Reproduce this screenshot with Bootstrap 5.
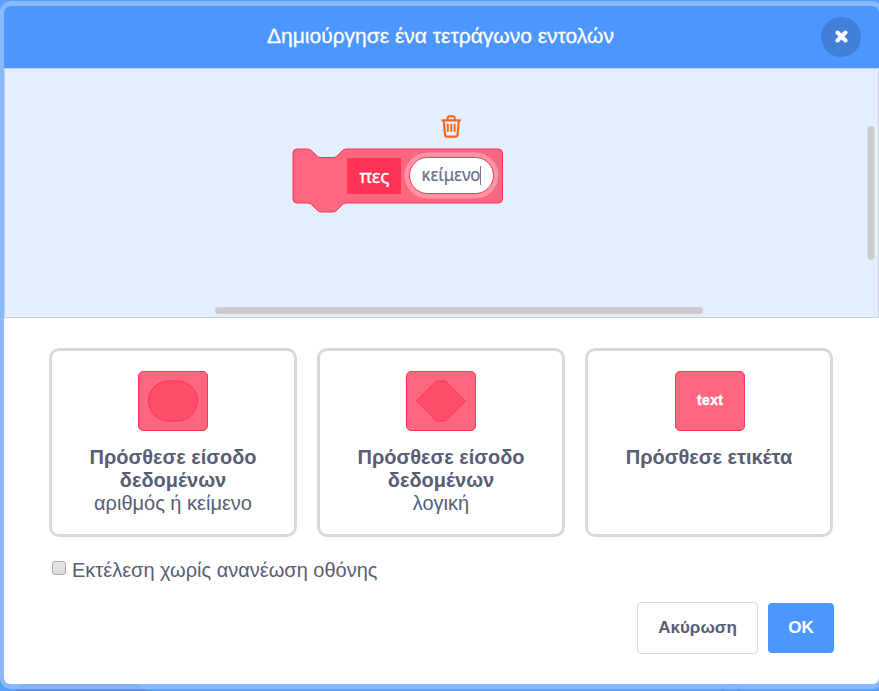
<!DOCTYPE html>
<html lang="el">
<head>
<meta charset="utf-8">
<meta name="viewport" content="width=device-width, initial-scale=1">
<title>Δημιούργησε ένα τετράγωνο εντολών</title>
<link href="https://cdn.jsdelivr.net/npm/bootstrap@5.3.0/dist/css/bootstrap.min.css" rel="stylesheet">
<style>
body{font-family:"Liberation Sans",Arial,sans-serif;color:#575e75;background:#5a9ffb;height:691px;overflow:hidden}
.backdrop-deco{position:absolute;left:0;top:0;z-index:-1}
.page{padding-top:1px;isolation:isolate}
.dialog-frame{width:883px;height:688px;border:solid rgba(255,255,255,.28);border-width:5px 4px;border-radius:11px;background-clip:padding-box}
.dialog-box{width:875px;height:678px;border-radius:6px;background:#fff}
.dialog-head{height:62px;background:#4c97ff;color:#fff;display:grid;grid-template-columns:58px 1fr 58px}
.dialog-title{font-size:21px;line-height:24px;font-weight:400;-webkit-text-stroke:.3px #fff;padding:0 2px 3px 0}
.close-btn{width:40px;height:40px;background:#4280d7;margin-bottom:1px}
.workspace{height:250px;background:#e3effe;border:1px solid #ccd0d6}
.options{gap:20px;padding:30px 46px 0 45px}
.option{width:248px;height:189px;border:3px solid #d9d9d9;border-radius:10px;padding-top:20px;background:#fff;font-size:20px;line-height:23px;color:#575e75}
.option svg{margin-bottom:15px}
.check-row{padding:21px 0 0 48px;font-size:20px;line-height:24px}
.check-box{appearance:none;width:14px;height:14px;margin:3px 6px 0 0;border:1px solid #a9a9a9;border-radius:3px;background:linear-gradient(#e9e9e9,#dadada)}
.actions{gap:10px;padding:20px 45px 0 0}
.btn-dialog{font-size:17px;font-weight:700;border-radius:4px;padding:0}
.btn-cancel{width:121px;height:52px;border:1px solid #d9d9d9;color:#575e75;background:#fff}
.btn-ok{width:66px;height:50px;background:#4c97ff;color:#fff;border:0}
</style>
<script src="https://cdn.jsdelivr.net/npm/bootstrap@5.3.0/dist/js/bootstrap.bundle.min.js" defer></script>
</head>
<body>
<div class="page">
<svg class="backdrop-deco" width="879" height="691"><path d="M14 691q7-8 14-8H131q8 0 16 8" fill="#5d8fe8"/><circle cx="731" cy="694" r="9" fill="none" stroke="#4c8eea"/></svg>
<div class="dialog-frame">
<div class="dialog-box d-flex flex-column overflow-hidden" role="dialog" aria-labelledby="dlg-title">
<header class="dialog-head align-items-center">
  <span></span>
  <h1 class="dialog-title text-center mb-0" id="dlg-title">Δημιούργησε ένα τετράγωνο εντολών</h1>
  <button class="close-btn btn rounded-circle p-0 border-0 d-flex align-items-center justify-content-center" aria-label="Κλείσιμο">
    <svg width="14" height="14" viewBox="0 0 14 14"><path d="M3.500 2.500l8 8M11.500 2.500l-8 8" stroke="#fff" stroke-width="4" stroke-linecap="round"/></svg>
  </button>
</header>
<div class="workspace">
  <svg class="d-block" width="873" height="248" viewBox="5 69 873 248">
    <g fill="none" stroke="#ff661a" stroke-linejoin="round" stroke-linecap="round">
      <path d="M442.3 120.3h17.8M443.8 120.3l1.2 14.2q.3 2.2 2.3 2.2h8q2 0 2.300-2.200l1.200-14.200" stroke-width="2.2"/>
      <path d="M447.600 119.500v-1q0-2.300 2.200-2.300h2.800q2.200 0 2.200 2.300v1" stroke-width="2"/>
      <path d="M447.800 124.500v6.500M451.200 124.500v6.500M454.600 124.500v6.500" stroke-width="2"/>
    </g>
    <path d="M293 153q0-4 4-4h10c3 0 4 1 6 3l3 3c2 2 3 2.500 6 2.500h10c3 0 4-.5 6-2.500l3-3c2-2 3-3 6-3h151.500q4 0 4 4v46q0 4-4 4H347c-3 0-4 1-6 3l-3 3c-2 2-3 3-6 3h-10c-3 0-4-1-6-3l-3-3c-2-2-3-3-6-3h-10q-4 0-4-4z" fill="#ff6680" stroke="#ff3355"/>
    <rect x="347" y="158" width="54" height="36" fill="#ff3355"/>
    <text x="359.500" y="183" textLength="30" lengthAdjust="spacingAndGlyphs" font-family="Noto Sans,sans-serif" font-size="18" fill="#fff" stroke="#fff" stroke-width=".3">πες</text>
    <rect x="404.500" y="152.500" width="94" height="46" rx="23" fill="#ff94a6"/>
    <rect x="409.500" y="157.500" width="84" height="36" rx="18" fill="#fff" stroke="#ff3355"/>
    <text x="421.500" y="181" textLength="59" lengthAdjust="spacingAndGlyphs" font-family="Noto Sans,sans-serif" font-size="18" fill="#686e82" stroke="#686e82" stroke-width=".2">κείμενο</text>
    <path d="M480.500 166v19" stroke="#777c8c"/>
    <rect x="867.500" y="126" width="7" height="134" rx="3.500" fill="#ccc"/>
    <rect x="215" y="307" width="488" height="7" rx="3.500" fill="#ccc"/>
  </svg>
</div>
<div class="options d-flex">
  <button class="option d-flex flex-column align-items-center">
    <svg width="70" height="60" viewBox="0 0 70 60"><rect x=".5" y=".5" width="69" height="59" rx="4.500" fill="#ff6680" stroke="#ff3355"/><rect x="10.500" y="10" width="49" height="40" rx="20" fill="#ff4d6a" stroke="#ff3355"/></svg>
    <strong>Πρόσθεσε είσοδο<br>δεδομένων</strong><span>αριθμός ή κείμενο</span>
  </button>
  <button class="option d-flex flex-column align-items-center">
    <svg width="70" height="60" viewBox="0 0 70 60"><rect x=".5" y=".5" width="69" height="59" rx="4.500" fill="#ff6680" stroke="#ff3355"/><path d="M10.500 30l20-20h9l20 20-20 20h-9z" fill="#ff4d6a" stroke="#ff3355"/></svg>
    <strong>Πρόσθεσε είσοδο<br>δεδομένων</strong><span>λογική</span>
  </button>
  <button class="option d-flex flex-column align-items-center">
    <svg width="72" height="60" viewBox="-2 0 72 60"><rect x=".5" y=".5" width="69" height="59" rx="4.500" fill="#ff6680" stroke="#ff3355"/><text x="35" y="34" text-anchor="middle" font-size="14" font-weight="700" fill="#fff" stroke="#fff" stroke-width=".4" textLength="26">text</text></svg>
    <strong>Πρόσθεσε ετικέτα</strong>
  </button>
</div>
<label class="check-row d-flex"><input type="checkbox" class="check-box flex-shrink-0"><span>Εκτέλεση χωρίς ανανέωση οθόνης</span></label>
<div class="actions d-flex justify-content-end align-items-center">
  <button class="btn btn-dialog btn-cancel">Ακύρωση</button>
  <button class="btn btn-dialog btn-ok">OK</button>
</div>
</div>
</div>
</div>
</body>
</html>
